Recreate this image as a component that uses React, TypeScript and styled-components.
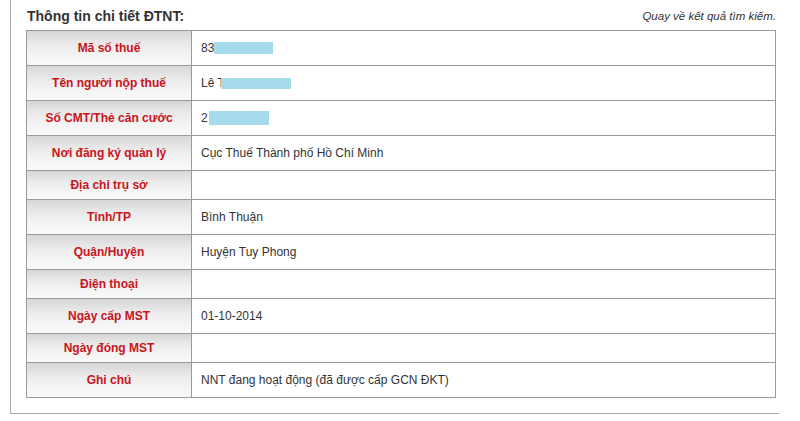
import React from "react";
import styled, { createGlobalStyle } from "styled-components";

const GlobalStyle = createGlobalStyle`
  html, body {
    margin: 0;
    padding: 0;
    background: #ffffff;
    font-family: "Liberation Sans", Arial, sans-serif;
  }
`;

const Page = styled.div`
  padding-left: 10px;
`;

const Panel = styled.div`
  width: 769px;
  box-sizing: border-box;
  border-left: 1px solid #a9a9a9;
  border-bottom: 1px solid #a9a9a9;
  padding: 0 3px 15px 15px;
`;

const TitleBar = styled.div`
  height: 30px;
  display: flex;
  align-items: center;
  justify-content: space-between;
  padding-top: 2px;
  box-sizing: border-box;
`;

const Title = styled.div`
  font-size: 14px;
  font-weight: bold;
  color: #333333;
  padding-left: 1px;
`;

const BackLink = styled.a`
  font-size: 11.5px;
  font-style: italic;
  color: #333333;
  text-decoration: none;
  cursor: pointer;
`;

const Grid = styled.div`
  display: grid;
  grid-template-columns: 165px 1fr;
  border-top: 1px solid #9a9a9a;
  border-left: 1px solid #9a9a9a;
  width: 750px;
  box-sizing: border-box;
`;

const Label = styled.div`
  display: flex;
  align-items: center;
  justify-content: center;
  padding: 7px 4px;
  min-height: 14px;
  border-right: 1px solid #9a9a9a;
  border-bottom: 1px solid #9a9a9a;
  background: linear-gradient(to bottom, #d6d6d6 0%, #e9e9e9 35%, #f4f4f4 70%, #f9f9f9 100%);
  font-size: 12px;
  line-height: 14px;
  font-weight: bold;
  color: #c8141c;
`;

const Value = styled.div`
  display: flex;
  align-items: center;
  padding: 10px 9px;
  border-right: 1px solid #9a9a9a;
  border-bottom: 1px solid #9a9a9a;
  font-size: 12px;
  line-height: 14px;
  color: #333333;
  background: #ffffff;
`;

const Redact = styled.span<{ $w: number; $h: number; $shift?: number }>`
  display: inline-block;
  width: ${(p) => p.$w}px;
  height: ${(p) => p.$h}px;
  margin-left: ${(p) => p.$shift ?? 0}px;
  background: #a6dbec;
`;

type Row = { label: string; value: React.ReactNode };

const rows: Row[] = [
  { label: "Mã số thuế", value: <>83<Redact $w={59} $h={12} /></> },
  { label: "Tên người nộp thuế", value: <>Lê T<Redact $w={70} $h={11} $shift={-4} /></> },
  { label: "Số CMT/Thẻ căn cước", value: <>2<Redact $w={60} $h={14} $shift={1} /></> },
  { label: "Nơi đăng ký quản lý", value: "Cục Thuế Thành phố Hồ Chí Minh" },
  { label: "Địa chỉ trụ sở", value: "" },
  { label: "Tỉnh/TP", value: "Bình Thuận" },
  { label: "Quận/Huyện", value: "Huyện Tuy Phong" },
  { label: "Điện thoại", value: "" },
  { label: "Ngày cấp MST", value: "01-10-2014" },
  { label: "Ngày đóng MST", value: "" },
  { label: "Ghi chú", value: "NNT đang hoạt động (đã được cấp GCN ĐKT)" },
];

export default function App() {
  return (
    <>
      <GlobalStyle />
      <Page>
        <Panel>
          <TitleBar>
            <Title>Thông tin chi tiết ĐTNT:</Title>
            <BackLink>Quay về kết quả tìm kiếm.</BackLink>
          </TitleBar>
          <Grid>
            {rows.map((r) => (
              <React.Fragment key={r.label}>
                <Label>{r.label}</Label>
                <Value>{r.value}</Value>
              </React.Fragment>
            ))}
          </Grid>
        </Panel>
      </Page>
    </>
  );
}
